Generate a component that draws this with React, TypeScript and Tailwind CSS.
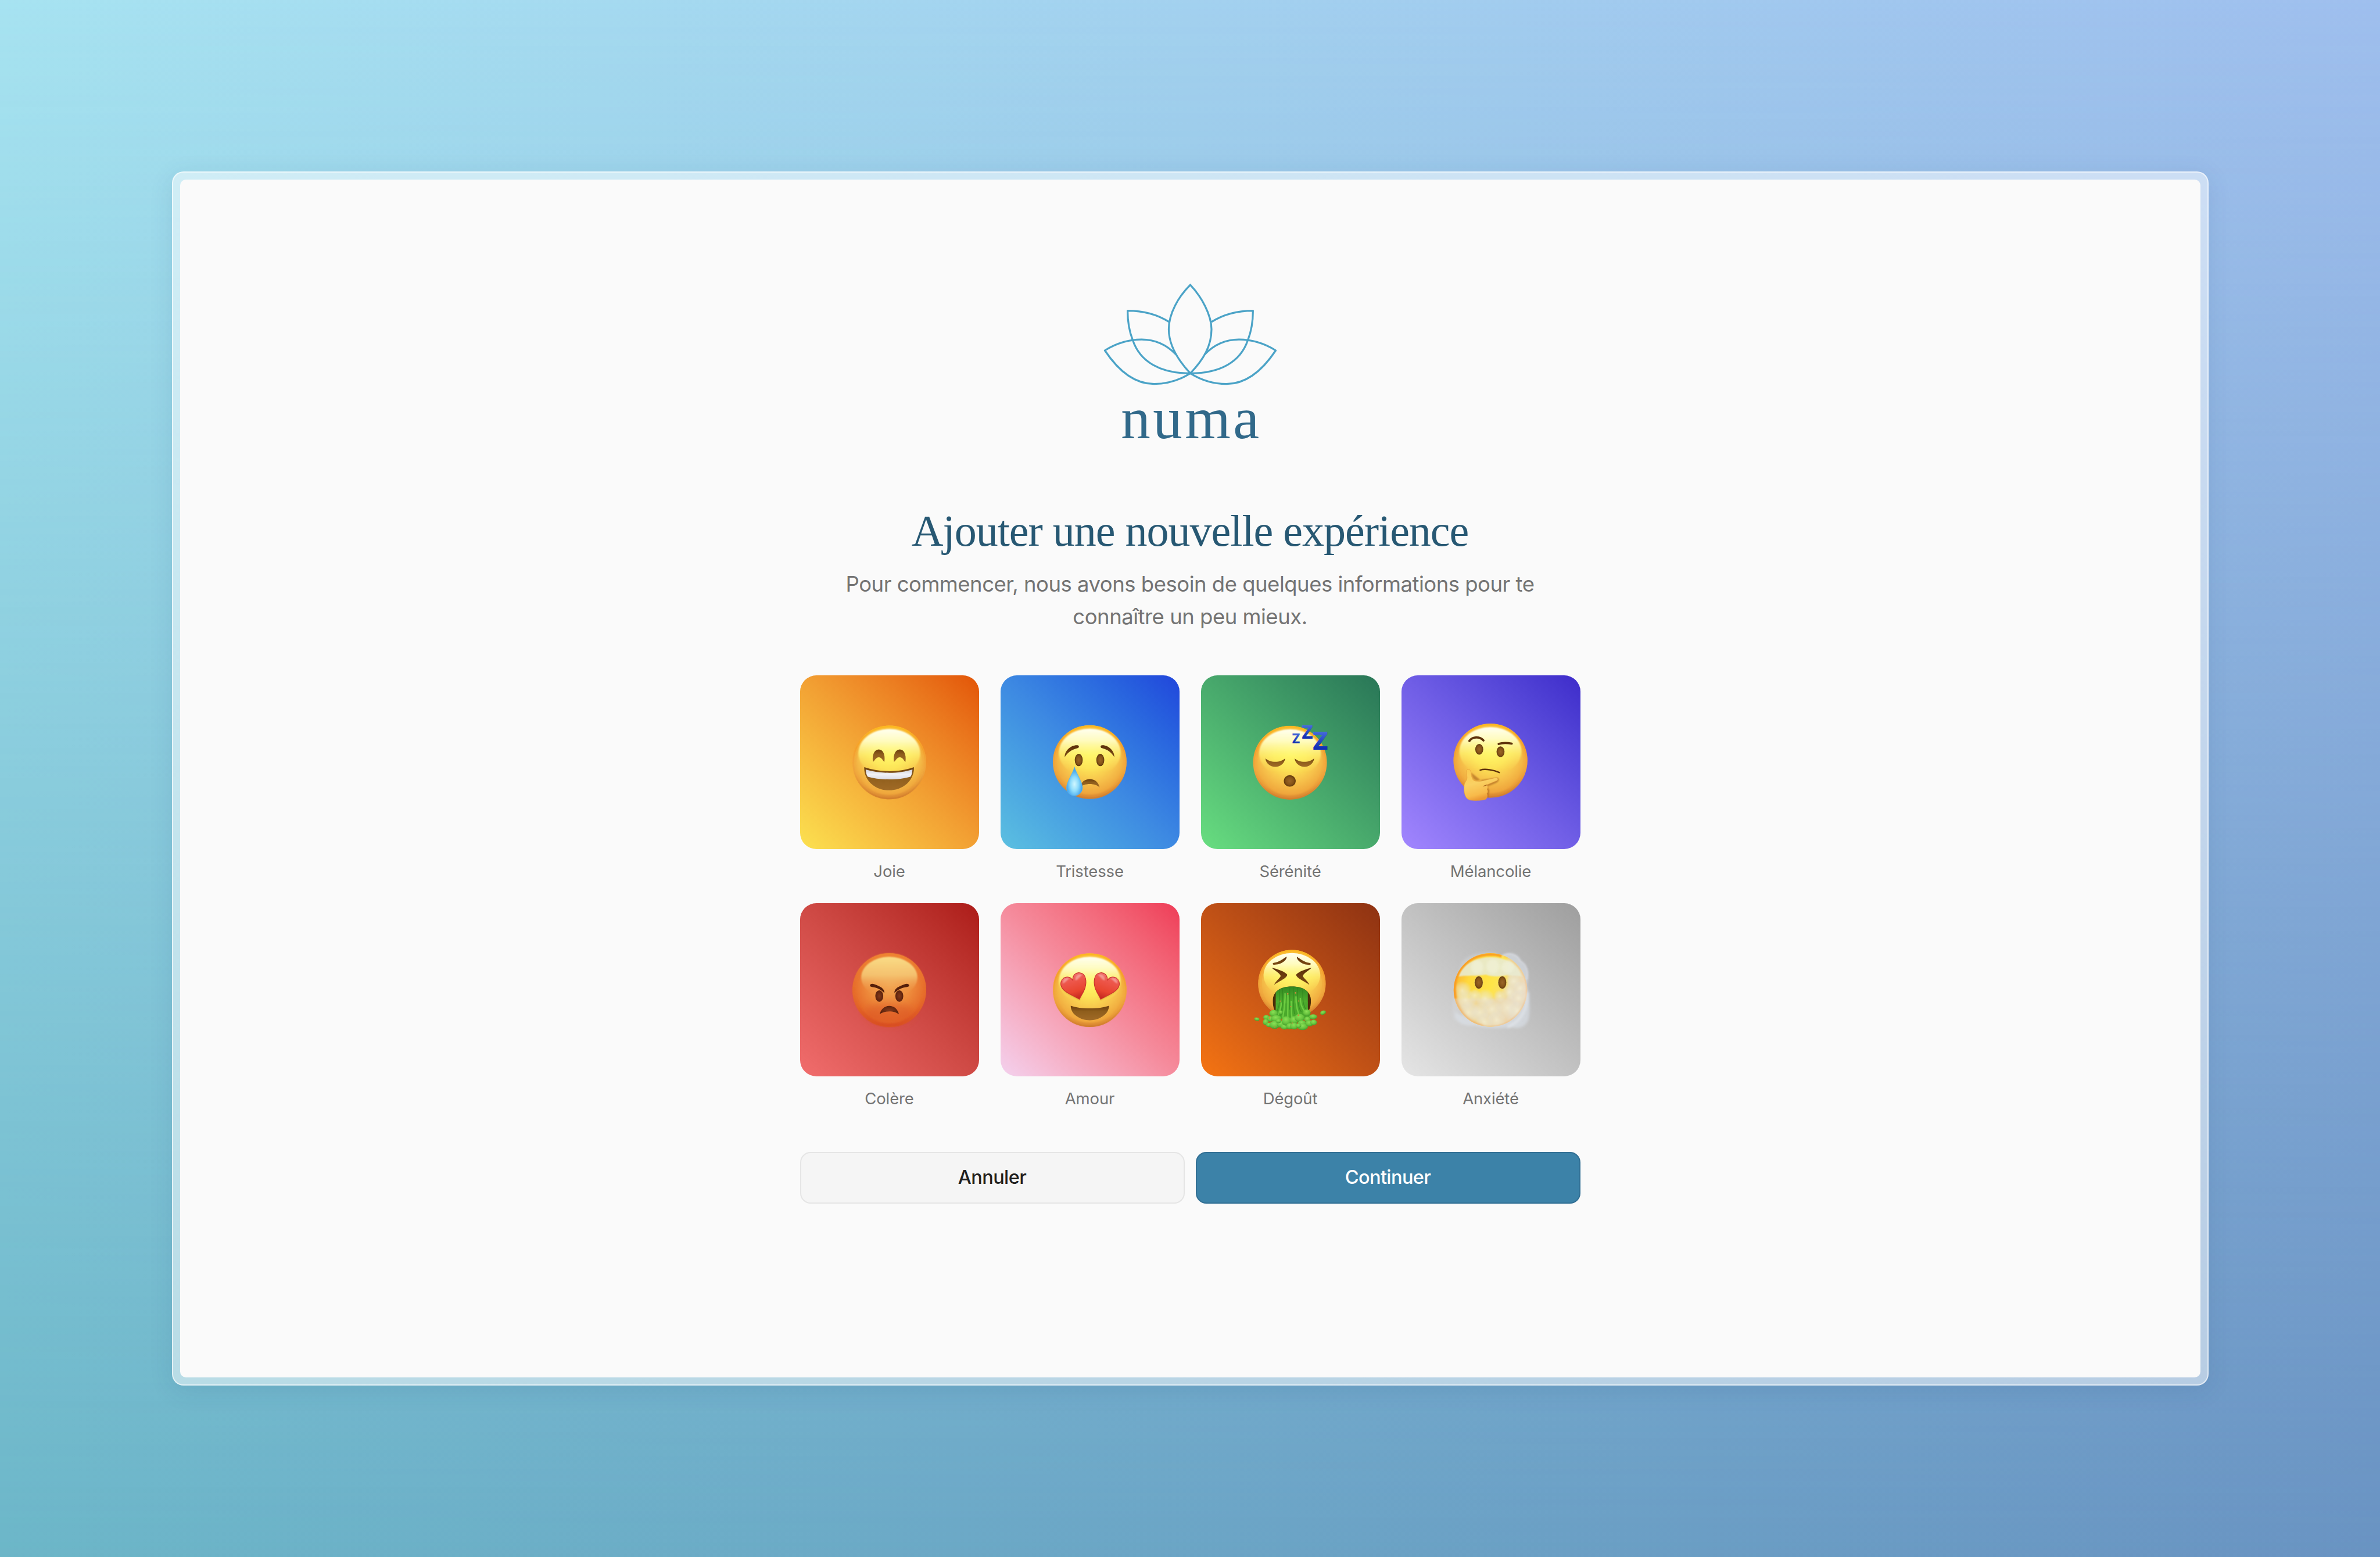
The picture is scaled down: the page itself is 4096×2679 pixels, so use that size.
import { type ReactNode } from "react";

function Defs() {
  return (
    <svg className="absolute h-0 w-0" aria-hidden="true">
      <defs>
        <radialGradient id="skin" cx="0.5" cy="0.38" r="0.62">
          <stop offset="0" stopColor="#fff45f" />
          <stop offset="0.35" stopColor="#fce256" />
          <stop offset="0.65" stopColor="#f6c04a" />
          <stop offset="0.88" stopColor="#efa63c" />
          <stop offset="1" stopColor="#d98530" />
        </radialGradient>
        <linearGradient id="skinRim" x1="0" y1="0" x2="0" y2="1">
          <stop offset="0" stopColor="#fdb820" />
          <stop offset="0.3" stopColor="#f59c28" stopOpacity="0.8" />
          <stop offset="0.6" stopColor="#ef9c38" stopOpacity="0.25" />
          <stop offset="1" stopColor="#d07c2c" stopOpacity="0.6" />
        </linearGradient>
        <linearGradient id="shine" x1="0" y1="0" x2="0" y2="1">
          <stop offset="0" stopColor="#fffff0" />
          <stop offset="0.25" stopColor="#fffdc4" stopOpacity="0.95" />
          <stop offset="0.55" stopColor="#fff873" stopOpacity="0.65" />
          <stop offset="0.9" stopColor="#ffec5c" stopOpacity="0" />
        </linearGradient>
        <radialGradient id="rageSkin" cx="0.5" cy="0.42" r="0.58">
          <stop offset="0" stopColor="#f3a651" />
          <stop offset="0.5" stopColor="#ee8c3c" />
          <stop offset="0.85" stopColor="#e66c2a" />
          <stop offset="1" stopColor="#df5a28" />
        </radialGradient>
        <linearGradient id="rageRim" x1="0" y1="0" x2="0" y2="1">
          <stop offset="0" stopColor="#f08532" />
          <stop offset="0.5" stopColor="#e86f2b" stopOpacity="0" />
          <stop offset="1" stopColor="#d64a1e" stopOpacity="0.9" />
        </linearGradient>
        <linearGradient id="rageShine" x1="0" y1="0" x2="0" y2="1">
          <stop offset="0" stopColor="#f9dc86" />
          <stop offset="0.45" stopColor="#f5c673" stopOpacity="0.9" />
          <stop offset="0.8" stopColor="#f0a355" stopOpacity="0.2" />
          <stop offset="1" stopColor="#f0a355" stopOpacity="0" />
        </linearGradient>
        <radialGradient id="eye">
          <stop offset="0" stopColor="#9a6527" />
          <stop offset="0.65" stopColor="#855318" />
          <stop offset="1" stopColor="#5f370c" />
        </radialGradient>
        <radialGradient id="rageEye">
          <stop offset="0" stopColor="#82391a" />
          <stop offset="1" stopColor="#5a210c" />
        </radialGradient>
        <linearGradient id="mouth" x1="0" y1="0" x2="0" y2="1">
          <stop offset="0" stopColor="#6a3d0c" />
          <stop offset="0.4" stopColor="#8f5e1c" />
          <stop offset="1" stopColor="#a06a26" />
        </linearGradient>
        <linearGradient id="brow" x1="0" y1="0" x2="0" y2="1">
          <stop offset="0" stopColor="#5c2f0a" />
          <stop offset="1" stopColor="#7d4c14" />
        </linearGradient>
        <linearGradient id="teeth" x1="0" y1="0" x2="0" y2="1">
          <stop offset="0" stopColor="#d2d2da" />
          <stop offset="0.5" stopColor="#f1f1f6" />
          <stop offset="1" stopColor="#dcdce6" />
        </linearGradient>
        <radialGradient id="tear" cx="0.5" cy="0.6" r="0.62">
          <stop offset="0" stopColor="#d0f7ff" />
          <stop offset="0.4" stopColor="#8fdcfb" />
          <stop offset="0.75" stopColor="#4aaaf0" />
          <stop offset="1" stopColor="#3f97e0" />
        </radialGradient>
        <linearGradient id="snore" x1="0" y1="0" x2="0" y2="1">
          <stop offset="0.15" stopColor="#4a70dd" />
          <stop offset="0.75" stopColor="#1230b4" />
        </linearGradient>
        <linearGradient id="hand" x1="0" y1="0" x2="0.3" y2="1">
          <stop offset="0" stopColor="#fbc94e" />
          <stop offset="0.5" stopColor="#fad163" />
          <stop offset="0.85" stopColor="#f8ba4a" />
          <stop offset="1" stopColor="#ec9a35" />
        </linearGradient>
        <linearGradient id="heart" x1="0.2" y1="0" x2="0.5" y2="1">
          <stop offset="0" stopColor="#f58b8e" />
          <stop offset="0.3" stopColor="#ee5a50" />
          <stop offset="0.75" stopColor="#e8452f" />
          <stop offset="1" stopColor="#c92a22" />
        </linearGradient>
        <linearGradient id="goo" x1="0" y1="0" x2="0" y2="1">
          <stop offset="0" stopColor="#2f8420" />
          <stop offset="0.5" stopColor="#4cab2c" />
          <stop offset="1" stopColor="#66c63c" />
        </linearGradient>
        <radialGradient id="blob" cx="0.45" cy="0.32" r="0.7">
          <stop offset="0" stopColor="#8ae056" />
          <stop offset="0.6" stopColor="#66c23d" />
          <stop offset="1" stopColor="#3f9828" />
        </radialGradient>
        <radialGradient id="puff">
          <stop offset="0" stopColor="#f3efd6" stopOpacity="0.75" />
          <stop offset="0.6" stopColor="#e9e4d0" stopOpacity="0.45" />
          <stop offset="1" stopColor="#e4e4de" stopOpacity="0" />
        </radialGradient>
        <linearGradient id="fogSkin" x1="0" y1="0" x2="1" y2="0.4">
          <stop offset="0" stopColor="#f79a2c" />
          <stop offset="0.3" stopColor="#ffd83c" />
          <stop offset="0.6" stopColor="#ffe548" />
          <stop offset="1" stopColor="#f2cfa0" />
        </linearGradient>
        <filter id="soft1" x="-20%" y="-20%" width="140%" height="140%">
          <feGaussianBlur stdDeviation="1" />
        </filter>
        <filter id="soft3" x="-30%" y="-30%" width="160%" height="160%">
          <feGaussianBlur stdDeviation="3" />
        </filter>
        <filter id="soft8" x="-30%" y="-30%" width="160%" height="160%">
          <feGaussianBlur stdDeviation="8" />
        </filter>
        <clipPath id="fogFace">
          <circle cx="290" cy="286" r="236" />
        </clipPath>
        <clipPath id="sickMouth">
          <path d="M153 385C153 325 205 293 276 293S398 325 398 385C398 425 385 460 360 470H190C165 460 153 425 153 385Z" />
        </clipPath>
      </defs>
    </svg>
  );
}

function Face({ cx = 0, cy = 0, r = 78.7 }: { cx?: number; cy?: number; r?: number }) {
  return (
    <g transform={`translate(${cx} ${cy}) scale(${r / 78.7})`}>
      <circle r="78.7" fill="url(#skin)" />
      <circle r="77" fill="none" stroke="url(#skinRim)" strokeWidth="3.4" />
      <circle r="74" fill="none" stroke="url(#skinRim)" strokeWidth="8" opacity="0.6" filter="url(#soft1)" />
      <ellipse cy="-20" rx="66" ry="51.5" fill="url(#shine)" filter="url(#soft1)" />
    </g>
  );
}

function Eyes({ x1, y1, x2, y2, ry, fill = "url(#eye)" }: { x1: number; y1: number; x2: number; y2: number; ry: number; fill?: string }) {
  return (
    <g fill={fill}>
      <ellipse cx={x1} cy={y1} rx="8.5" ry={ry} />
      <ellipse cx={x2} cy={y2} rx="8.5" ry={ry} />
    </g>
  );
}

function Joy() {
  return (
    <>
      <Face cy={0.5} />
      <g fill="url(#mouth)">
        <path d="M-35 -0.5C-37.5 -17 -31 -27.3 -22.5 -27.3S-8 -17 -10.5 -0.5C-14 -3 -16 -10.5 -22.5 -10.5S-31 -3 -35 -0.5Z" />
        <path d="M10 -0.5C7.5 -17 14 -27.3 22.5 -27.3S37 -17 34.5 -0.5C31 -3 29 -10.5 22.5 -10.5S14 -3 10 -0.5Z" />
      </g>
      <path d="M-53.5 10.5C-20 22 20 22 52.5 10.5C54 38 30 60 -0.5 60S-55 38 -53.5 10.5Z" fill="url(#mouth)" />
      <path d="M-50.5 15.5C-20 25 20 25 49.5 15.5C49 22 48 28 45 31C20 38.5 -20 38.5 -46 31C-49 27 -50.5 20 -50.5 15.5Z" fill="url(#teeth)" />
    </>
  );
}

function Sad() {
  return (
    <>
      <Face cy={-0.3} />
      <g fill="url(#brow)">
        <path d="M-53.5 -11C-54 -26 -38 -38 -25 -36C-22 -34.5 -23 -31 -26 -30C-38 -27 -46 -22 -53.5 -11Z" />
        <path d="M52.5 -11C53 -26 37 -38 25 -36C22 -34.5 23 -31 26 -30C38 -27 45 -22 52.5 -11Z" />
      </g>
      <Eyes x1={-23.6} y1={-4.7} x2={22.5} y2={-4.7} ry={13.2} />
      <path d="M-21 54C-17 30 17 30 21 54C12 44 -12 44 -21 54Z" fill="url(#mouth)" />
      <path d="M-32.7 10C-29 24 -15.5 42 -15.5 55A17.2 16.5 0 0 1 -49.9 55C-49.9 42 -36 24 -32.7 10Z" fill="url(#tear)" stroke="#5bb4ea" strokeWidth="0.8" />
    </>
  );
}

function Sleepy() {
  return (
    <>
      <Face cx={-0.5} cy={1} />
      <g fill="url(#mouth)">
        <path d="M-53 -8C-43 1.5 -21 1.5 -11 -8C-12 3 -22 10 -32 10S-52 3 -53 -8Z" />
        <path d="M9.5 -8C19.5 1.5 41 1.5 51 -8C50 3 40 10 30.5 10S10.5 3 9.5 -8Z" />
      </g>
      <ellipse cx="-1" cy="40" rx="12.8" ry="12.3" fill="url(#eye)" />
      <g fontFamily="Inter, sans-serif" fontWeight="800" fill="url(#snore)">
        <text x="3.5" y="-40.7" fontSize="29" textLength="18" lengthAdjust="spacingAndGlyphs">Z</text>
        <text x="23.5" y="-50" fontSize="38.5" textLength="26" lengthAdjust="spacingAndGlyphs">Z</text>
        <text x="46.5" y="-27" fontSize="53" textLength="35.5" lengthAdjust="spacingAndGlyphs">Z</text>
      </g>
    </>
  );
}

function Thinking() {
  return (
    <>
      <Face cx={-0.5} cy={-3.3} r={79} />
      <g fill="none" stroke="#5f330b" strokeLinecap="round">
        <path d="M-45.5 -45.5C-40 -54 -24 -56.5 -15.5 -46.5" strokeWidth="4.6" />
        <path d="M17 -39C25 -42 36 -41.5 45 -39.8" strokeWidth="4.6" />
        <path d="M-22.5 16.8C-12 13 8 17 18.3 22" strokeWidth="3" />
      </g>
      <Eyes x1={-24.5} y1={-27.7} x2={21} y2={-22.3} ry={11.5} />
      <path d="M-42 22C-39 32 -38 37 -30 39L14 33C20 35 18 42 10 45L-7 52L-3 60L-5 76L-14 70L-12 46Z" fill="#a5601a" opacity="0.6" filter="url(#soft1)" />
      <path d="M-48 15.3C-44 15.3 -42.6 19 -42 22C-41 30 -40 40.5 -31 40.5C-25 40.8 -20 41 -15 39.2L9 33.5C14 32.3 17.5 36 14 39L-8.5 48.5C-5 52 -6 56 -8 57.5C-5.5 61 -6 65 -8 67C-6 71 -7 76 -10.5 79C-16 82 -38 83 -46 80.5C-54 77.5 -58.5 66 -56.7 49C-56 43 -51 39 -50.5 34C-50.5 28 -52 23 -51.7 19C-51 16.5 -50 15.3 -48 15.3Z" fill="url(#hand)" stroke="#e39a36" strokeWidth="0.8" />
      <path d="M-8.5 48.5L-15 51" stroke="#a8611c" strokeWidth="1.6" strokeLinecap="round" />
    </>
  );
}

function Rage() {
  return (
    <>
      <circle r="79" fill="url(#rageSkin)" />
      <circle r="75" fill="none" stroke="url(#rageRim)" strokeWidth="8" opacity="0.8" filter="url(#soft1)" />
      <ellipse cy="50" rx="52" ry="24" fill="#d94f22" opacity="0.45" filter="url(#soft8)" />
      <ellipse cy="-27" rx="60" ry="44" fill="url(#rageShine)" filter="url(#soft1)" />
      <g fill="#55200b">
        <path d="M-41.5 -9.5C-41 -14 -36 -14 -32 -12.5C-20 -8 -10 -4 -10.5 6.5C-18 -1 -25 -5 -37 -6.5C-40 -7 -41.5 -8 -41.5 -9.5Z" />
        <path d="M42.5 -9.5C42 -14 37 -14 33 -12.5C21 -8 10 -4 11 6.5C18.5 -1 26 -5 38 -6.5C41 -7 42.5 -8 42.5 -9.5Z" />
      </g>
      <Eyes x1={-21.4} y1={12.8} x2={21.4} y2={12.8} ry={12.3} fill="url(#rageEye)" />
      <path d="M-20.5 52C-16 28 16 28 20.5 52C12 43.5 -12 43.5 -20.5 52Z" fill="url(#rageEye)" />
    </>
  );
}

function HeartEye() {
  return (
    <>
      <path d="M-22 22C-34 14 -61 5 -61 -10L-12 -12C-13 7 -19 14 -22 22Z" fill="#c2761d" opacity="0.5" filter="url(#soft1)" />
      <path d="M-22 19.5C-34 12 -62 3 -62 -13C-62 -29 -42 -33 -36.4 -20.5C-37 -33 -29 -37.5 -22 -37C-7 -36 -6.5 -17 -10 -5C-13 5 -19 12 -22 19.5Z" fill="url(#heart)" stroke="#c9302c" strokeWidth="1.4" />
      <path d="M-58 -14C-58 -24 -50 -27 -44 -25C-48 -22 -52 -16 -58 -14ZM-31 -21C-32 -30 -24 -36 -16 -32C-22 -28 -26 -20 -31 -21Z" fill="#ffffff" opacity="0.35" filter="url(#soft1)" />
    </>
  );
}

function Love() {
  return (
    <>
      <Face cy={0.3} />
      <HeartEye />
      <g transform="translate(1.3 0) scale(-1 1)">
        <HeartEye />
      </g>
      <path d="M-40.7 33.5C-20 41 20 41 41.2 33.5C41 52 20 64.5 0 64.5S-41 52 -40.7 33.5Z" fill="url(#mouth)" />
    </>
  );
}

const SPLASH: [number, number, number, number][] = [
  [112, 492, 20, 15], [108, 522, 18, 20], [130, 540, 20, 14], [138, 502, 20, 18],
  [158, 466, 27, 22], [204, 460, 14, 13], [175, 500, 34, 22], [165, 540, 34, 25],
  [205, 535, 26, 22], [228, 552, 24, 18], [240, 515, 30, 30], [262, 548, 22, 20],
  [290, 510, 28, 26], [290, 548, 26, 22], [325, 495, 32, 26], [340, 530, 26, 20],
  [345, 552, 34, 21], [372, 462, 24, 22], [375, 505, 20, 18], [388, 530, 26, 20],
  [415, 525, 21, 18], [412, 488, 26, 16], [318, 545, 18, 14], [190, 515, 18, 14],
];

function Sick() {
  return (
    <g transform="translate(-88.4 -105.5) scale(0.33333)">
      <Face cx={276} cy={276} r={216.5} />
      <g fill="url(#brow)">
        <path d="M242 102C245 125 205 155 160 154C150 152 150 143 162 141C190 138 215 120 242 102Z" />
        <path d="M308 103C305 126 345 156 390 155C400 153 400 144 388 142C360 139 335 121 308 103Z" />
        <path d="M147 174C180 180 235 200 246 218C246 240 190 262 162 283C172 258 200 240 204 226C200 210 165 190 147 174Z" />
        <path d="M402 174C370 180 315 200 303 218C303 240 360 262 388 283C378 258 350 240 346 226C350 210 385 190 402 174Z" />
      </g>
      <g clipPath="url(#sickMouth)">
        <rect x="150" y="290" width="250" height="190" fill="#4a2d0a" />
        <rect x="172" y="285" width="206" height="200" fill="url(#goo)" />
      </g>
      <path d="M173 400C190 440 150 470 150 500H400C400 470 365 440 378 395Z" fill="#4aa92c" />
      <g fill="none" stroke="#2c7d1c" strokeOpacity="0.55" strokeWidth="5" strokeLinecap="round">
        <path d="M195 320C198 380 200 420 175 460" />
        <path d="M216 308C216 370 218 430 205 480" />
        <path d="M262 302V440" />
        <path d="M285 302C284 370 285 420 292 470" />
        <path d="M312 305C312 370 312 420 335 455" />
        <path d="M345 315C345 370 345 420 372 445" />
      </g>
      <g fill="none" stroke="#7ad84a" strokeOpacity="0.75" strokeWidth="9" strokeLinecap="round">
        <path d="M232 340C234 400 226 440 218 490" />
        <path d="M250 350C252 410 248 450 250 500" />
        <path d="M272 390C274 430 272 460 276 490" />
        <path d="M302 360C302 410 308 440 320 470" />
        <path d="M330 370C330 400 340 430 356 452" />
        <path d="M207 400C208 430 198 450 190 470" />
      </g>
      {SPLASH.map(([x, y, rx, ry]) => (
        <ellipse key={`${x}-${y}`} cx={x} cy={y} rx={rx} ry={ry} fill="url(#blob)" />
      ))}
      <ellipse cx="51" cy="503" rx="17" ry="11" transform="rotate(12 51 503)" fill="url(#blob)" />
      <ellipse cx="476" cy="461" rx="19" ry="13" transform="rotate(-22 476 461)" fill="url(#blob)" />
      <g fill="#cf8a3c">
        <circle cx="249" cy="341" r="5" />
        <circle cx="299" cy="335" r="5" />
        <circle cx="201" cy="388" r="4" />
        <circle cx="320" cy="387" r="4" />
        <circle cx="269" cy="423" r="4" />
        <circle cx="318" cy="478" r="5" />
        <circle cx="133" cy="497" r="5" />
        <circle cx="167" cy="554" r="4" />
        <circle cx="278" cy="528" r="4" />
      </g>
    </g>
  );
}

const FOG: [number, number, number][] = [
  [110, 290, 62], [130, 350, 70], [190, 320, 42], [255, 340, 62], [350, 325, 40],
  [410, 300, 50], [440, 230, 45], [480, 275, 45], [470, 340, 55], [300, 410, 70],
  [400, 400, 80], [220, 430, 60], [150, 430, 70], [460, 420, 60], [330, 480, 60], [250, 490, 60],
];

function Foggy() {
  return (
    <g transform="translate(-97.2 -95.5) scale(0.33333)">
      <g fill="#dfe5ee" filter="url(#soft8)">
        <g opacity="0.55">
          <path d="M360 70C400 35 470 50 485 100C535 130 540 200 522 260C545 330 545 420 535 470C525 515 480 540 430 525C350 535 250 530 190 515C110 520 60 490 60 430L200 480L480 400L490 200Z" />
          <path d="M100 130C100 90 170 50 250 46C280 40 320 44 340 55L200 90L80 200Z" opacity="0.5" />
          <ellipse cx="68" cy="400" rx="22" ry="85" opacity="0.4" />
        </g>
      </g>
      <circle cx="290" cy="286" r="236" fill="url(#fogSkin)" />
      <g clipPath="url(#fogFace)">
        <rect x="400" y="50" width="150" height="480" fill="#e9e2d2" opacity="0.6" filter="url(#soft8)" />
        <rect x="50" y="340" width="500" height="220" fill="#ecd5b0" opacity="0.8" filter="url(#soft8)" />
        <path d="M85 200C100 130 190 76 290 76S470 120 490 200C440 190 420 200 400 190C340 205 290 200 260 188C200 200 130 190 85 200Z" fill="#e8ead2" opacity="0.9" filter="url(#soft3)" />
        <g fill="#f2f3da" opacity="0.6" filter="url(#soft8)">
          <ellipse cx="205" cy="140" rx="40" ry="45" />
          <ellipse cx="305" cy="135" rx="42" ry="48" />
          <ellipse cx="400" cy="140" rx="40" ry="38" />
        </g>
        {FOG.map(([x, y, r]) => (
          <circle key={`${x}-${y}`} cx={x} cy={y} r={r} fill="url(#puff)" />
        ))}
        <path d="M60 290C62 400 140 500 240 516" fill="none" stroke="#f0a450" strokeOpacity="0.6" strokeWidth="16" filter="url(#soft8)" />
        <circle cx="290" cy="286" r="233" fill="none" stroke="#f0a860" strokeOpacity="0.5" strokeWidth="7" filter="url(#soft3)" />
        <path d="M64 340C40 180 130 62 290 58C320 58 345 62 362 70" fill="none" stroke="#f99a1e" strokeOpacity="0.9" strokeWidth="17" filter="url(#soft3)" />
      </g>
      <path d="M362 72C400 40 460 55 480 100C520 120 535 170 522 220" fill="none" stroke="#f2f5fa" strokeOpacity="0.25" strokeWidth="12" filter="url(#soft3)" />
      <path d="M530 300C525 400 500 480 400 525" fill="none" stroke="#eff3f9" strokeOpacity="0.45" strokeWidth="16" filter="url(#soft8)" />
      <g fill="url(#eye)" stroke="#ffee7a" strokeWidth="2">
        <ellipse cx="215" cy="238" rx="27" ry="41" />
        <ellipse cx="366" cy="238" rx="27" ry="41" />
      </g>
    </g>
  );
}

const EMOTIONS: { label: string; gradient: string; face: ReactNode }[] = [
  { label: "Joie", gradient: "from-[#fbe150] via-[#f2a033] to-[#e25406]", face: <Joy /> },
  { label: "Tristesse", gradient: "from-[#5cc0e0] via-[#3d89e2] to-[#2245db]", face: <Sad /> },
  { label: "Sérénité", gradient: "from-[#68de80] via-[#48a96c] to-[#297657]", face: <Sleepy /> },
  { label: "Mélancolie", gradient: "from-[#a286fe] via-[#705ee6] to-[#3e2bca]", face: <Thinking /> },
  { label: "Colère", gradient: "from-[#f16d6d] via-[#cf4a45] to-[#ac1b18]", face: <Rage /> },
  { label: "Amour", gradient: "from-[#f3d1ee] via-[#f58b9c] to-[#ee3b57]", face: <Love /> },
  { label: "Dégoût", gradient: "from-[#f57412] via-[#c05116] to-[#8e3212]", face: <Sick /> },
  { label: "Anxiété", gradient: "from-[#e5e5e5] via-[#c2c2c2] to-[#9e9e9e]", face: <Foggy /> },
];

function Lotus() {
  return (
    <svg viewBox="160 130 1144 670" className="h-[179.8px] w-[307px]" fill="none" stroke="#4ba3c7" strokeWidth="12" strokeLinejoin="round">
      <path d="M732 145C655 222 594 330 594 430C594 530 655 630 732 713C815 625 868 540 868 430C868 340 805 222 732 145Z" />
      <path d="M596 383C520 335 430 311 330 311C330 390 345 455 363 500C410 640 540 712 732 713" />
      <path d="M868 383C944 335 1034 311 1134 311C1134 390 1119 455 1101 500C1054 640 924 712 732 713" />
      <path d="M640 592C580 530 505 496 420 496C340 496 255 522 184 566C290 725 395 781 500 781C585 781 665 755 732 713" />
      <path d="M824 592C884 530 959 496 1044 496C1124 496 1209 522 1280 566C1174 725 1069 781 964 781C879 781 799 755 732 713" />
    </svg>
  );
}

export default function App() {
  return (
    <div className="relative h-[2679px] w-[4096px] overflow-hidden bg-linear-to-r from-[#a7e3f1] via-[#a3d1ef] to-[#9fbfee] font-[Inter,sans-serif]">
      <Defs />
      <div className="absolute inset-0 bg-linear-to-r from-[#6cb6c8] to-[#6993c2] mask-t-from-0% mask-t-to-100%" />
      <div className="relative flex h-full items-center justify-center">
        <div className="h-[2089px] w-[3505px] rounded-[20px] border-2 border-white/60 bg-white/50 p-3 shadow-[0_8px_40px_rgba(30,70,120,0.12)]">
          <main className="flex h-full flex-col items-center rounded-[10px] bg-[#fafafa] pt-[177px]">
            <Lotus />
            <div className="mt-1 pl-[5px] font-['Liberation_Serif',serif] text-[101px] leading-[101px] tracking-[4.5px] text-[#31698a]">numa</div>
            <h1 className="mt-[100px] font-['Liberation_Serif',serif] text-[76px] leading-[84px] tracking-[-1px] text-[#275873]">
              Ajouter une nouvelle expérience
            </h1>
            <p className="mt-[22px] w-[1240px] text-center text-[36.5px] leading-[56.35px] tracking-[-0.5px] text-[#737373]">
              Pour commencer, nous avons besoin de quelques informations pour te
              <br />
              connaître un peu mieux.
            </p>
            <div className="mt-[73px] grid w-[1343px] grid-cols-4 gap-x-[37px] gap-y-[35px]">
              {EMOTIONS.map((e) => (
                <div key={e.label} className="flex flex-col items-center">
                  <div className={`flex h-[298.5px] w-full items-center justify-center rounded-[28px] bg-linear-to-tr ${e.gradient}`}>
                    <svg viewBox="-100 -100 200 200" className="size-[161px] overflow-visible">
                      {e.face}
                    </svg>
                  </div>
                  <span className="mt-[18px] text-[27.5px] leading-10 tracking-[-0.15px] text-[#737373]">{e.label}</span>
                </div>
              ))}
            </div>
            <div className="mt-[72px] grid w-[1343px] grid-cols-2 gap-[19px] text-[32.5px] font-medium tracking-[-0.6px]">
              <button className="h-[88.5px] rounded-[18px] border-2 border-[#e5e5e5] bg-[#f5f5f5] text-[#1f1f1f]">Annuler</button>
              <button className="h-[88.5px] rounded-[18px] border-2 border-[#316f94] bg-[#3c82a8] text-white">Continuer</button>
            </div>
          </main>
        </div>
      </div>
    </div>
  );
}
